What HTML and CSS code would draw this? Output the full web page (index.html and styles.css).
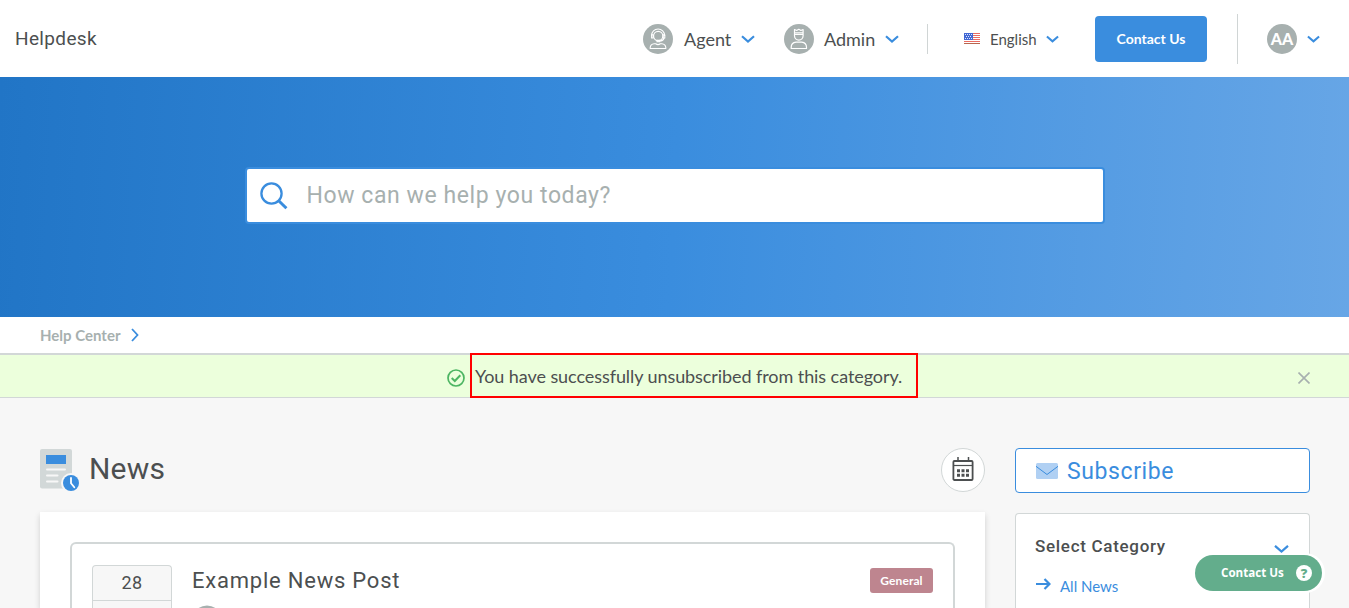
FILE: index.html
```html
<!DOCTYPE html>
<html lang="en">
<head>
<meta charset="utf-8">
<title>Helpdesk</title>
<link rel="stylesheet" href="styles.css">
</head>
<body>
<header class="topbar">
  <div class="brand rubik">Helpdesk</div>
  <nav class="nav">
    <a class="role role-agent">
      <svg class="avatar" viewBox="0 0 30 30"><circle cx="15" cy="15" r="15" fill="#a7b0af"/><g fill="none" stroke="#fff" stroke-width="1.100" stroke-linecap="round" stroke-linejoin="round"><path d="M7.200 24.500v-1q.3-3.300 4-3.700h1.500q2.300 1.700 4.600 0h1.500q3.700.4 4 3.700v1z"/><path d="M8.600 11.500a6.500 6.500 0 0 1 13 0"/><circle cx="15.200" cy="12" r="4.600"/><path d="M8.600 10.700v3.300h1.600v-3.300zM20.200 10.700h1.600V14h-1.600zM21 14.500q-1 2.500-4.500 2.500"/><path d="M14 16.300h2.800v1.400H14z" fill="#fff"/></g></svg>
      <span class="role-name">Agent</span>
      <svg class="chev" viewBox="0 0 14 8"><path d="M1 1.200 7 6.500l6-5.300"/></svg>
    </a>
    <a class="role role-admin">
      <svg class="avatar" viewBox="0 0 30 30"><circle cx="15" cy="15" r="15" fill="#a7b0af"/><g fill="none" stroke="#fff" stroke-width="1.200" stroke-linecap="round" stroke-linejoin="round"><path d="M7.200 24.500v-1.300q0-4.500 4.800-5.100h5.700q4.800.6 4.800 5.100v1.300z"/><path d="M10.500 5.500v6.300a4.300 4.300 0 0 0 8.600 0V5.500l-2.200 1-2.100-1.200-2.100 1.200zM10.500 8.800h8.600M10.500 10.500h8.600"/></g></svg>
      <span class="role-name">Admin</span>
      <svg class="chev" viewBox="0 0 14 8"><path d="M1 1.200 7 6.500l6-5.300"/></svg>
    </a>
    <div class="rule rule-short"></div>
    <a class="lang">
      <svg class="flag" viewBox="0 0 16 11"><path fill="#fff" d="M0 0h16v11H0z"/><path stroke="#e96b62" d="M0 .5h16M0 2.500h16M0 4.500h16M0 6.500h16M0 8.500h16"/><path stroke="#b9664f" d="M0 10.500h16"/><path fill="#4268d3" d="M0 0h9v7H0z"/><path stroke="#dce5ff" stroke-dasharray="1 1" d="M1 1.500h7M2 3.500h6M1 5.500h7"/></svg>
      <span class="lang-name">English</span>
      <svg class="chev chev-sm" viewBox="0 0 14 8"><path d="M1 1.200 7 6.500l6-5.300"/></svg>
    </a>
    <a class="contact">Contact Us</a>
    <div class="rule rule-tall"></div>
    <div class="initials">AA</div>
    <svg class="chev chev-sm" viewBox="0 0 14 8"><path d="M1 1.200 7 6.500l6-5.300"/></svg>
  </nav>
</header>
<section class="hero">
  <div class="search">
    <svg class="lens" viewBox="0 0 28 28"><g fill="none" stroke="#3a8dde" stroke-width="2.300"><circle cx="11.500" cy="11.500" r="10.100"/><path d="m18.700 18.700 7.700 7.600" stroke-width="3"/></g></svg>
    <span class="search-hint rubik">How can we help you today?</span>
  </div>
</section>
<div class="crumbs"><span>Help Center</span><svg class="crumb-arrow" viewBox="0 0 8 14"><path d="m1 1 5.500 6L1 13"/></svg></div>
<div class="notice">
  <svg class="ok" viewBox="0 0 18 18"><g fill="none" stroke="#4cb562" stroke-width="1.700"><circle cx="9" cy="9" r="8"/><path d="m4.700 9 3.100 3 5.500-5.700" stroke-width="2"/></g></svg>
  <div class="notice-box"><span class="notice-text">You have successfully unsubscribed from this category.</span></div>
  <svg class="close" viewBox="0 0 12 12"><path d="m.5.500 11 11M11.500.5l-11 11"/></svg>
</div>
<div class="page">
  <main class="main">
    <div class="heading">
      <svg class="news-icon" viewBox="0 0 40 42"><rect width="32" height="39.500" rx="2" fill="#d2d8d8"/><path fill="#3a8dde" d="M6 6h20v9H6z"/><path d="M7 20.500h18M7 26.500h10.500M7 32.500h10.500" stroke="#f7f7f7" stroke-width="2" stroke-linecap="round"/><circle cx="31" cy="34" r="10" fill="#f7f7f7"/><circle cx="31" cy="34" r="8" fill="#3a8dde"/><path d="M31 29v5.300l3.300 4" fill="none" stroke="#fff" stroke-width="1.800" stroke-linecap="round"/></svg>
      <h1 class="title rubik">News</h1>
      <div class="cal"><svg class="cal-icon" viewBox="0 0 22 24"><g fill="none" stroke="#4c4f50" stroke-width="1.800"><rect x="1.400" y="4" width="19.200" height="19" rx="1"/><path d="M2 8.500h18" stroke-width="1.200"/><path d="M6 0v4M16.500 0v4" stroke-width="1.500"/></g><path d="M5 13.800h12M5 18.300h12" stroke="#4c4f50" stroke-width="3" stroke-dasharray="3 1.500"/></svg></div>
    </div>
    <div class="panel">
      <article class="post">
        <div class="date"><div class="day rubik">28</div></div>
        <div class="post-body">
          <h2 class="post-title rubik">Example News Post</h2>
          <svg class="author" viewBox="0 0 30 6"><circle cx="15" cy="18.500" r="15" fill="#a7b0af"/></svg>
        </div>
        <span class="tag">General</span>
      </article>
    </div>
  </main>
  <aside class="side">
    <a class="subscribe"><svg class="mail" viewBox="0 0 22 16"><rect width="22" height="16" rx="1.500" fill="#b0d0f3"/><path d="m0 3.300 11 8.200 11-8.200" fill="none" stroke="#3a8dde"/></svg><span class="subscribe-text rubik">Subscribe</span></a>
    <div class="cats">
      <div class="cats-head"><span class="cats-title rubik">Select Category</span><svg class="chev cats-chev" viewBox="0 0 14 8"><path d="M.5.800 7 6.500 13.500.800"/></svg></div>
      <div class="cat"><svg class="arrow" viewBox="0 0 15 12"><path d="M0 6h13.500M8.500 1l5 5-5 5" fill="none" stroke="#3a8dde" stroke-width="2.200"/></svg><span>All News</span></div>
    </div>
  </aside>
</div>
<div class="widget"><span class="widget-text">Contact Us</span><span class="help">?</span></div>
</body>
</html>
```
FILE: styles.css
```css
* { box-sizing: border-box; }
html, body { height: 608px; overflow: hidden; }
body { margin: 0; background: #f7f7f7; color: #4c4f50; font-family: Lato, "Liberation Sans", sans-serif; white-space: nowrap; }
svg { display: block; flex: none; }
h1, h2 { margin: 0; font-weight: 400; }
.rubik { font-family: Roboto, "Liberation Sans", sans-serif; }

.topbar { height: 77px; padding: 0 29px 0 15px; background: #fff; display: flex; align-items: center; justify-content: space-between; }
.brand { font-size: 19px; letter-spacing: .35px; }
.nav { display: flex; align-items: center; height: 77px; padding-top: 1px; }
.role { display: flex; align-items: center; }
.role-agent { width: 141px; }
.role-admin { width: 143px; }
.avatar { width: 30px; height: 30px; margin-right: 11px; }
.role-admin .avatar { margin-right: 10px; }
.role-name { font-size: 18px; width: 57px; padding-bottom: 1px; }
.role-admin .role-name { width: 61px; }
.chev { width: 14px; height: 8px; fill: none; stroke: #3a8dde; stroke-width: 2.2; }
.chev-sm { width: 13px; }
.rule { width: 1px; background: #d0d5d5; }
.rule-short { height: 30px; }
.rule-tall { height: 50px; margin: 0 29px 0 30px; }
.lang { display: flex; align-items: center; width: 167px; padding-left: 36px; }
.flag { width: 16px; height: 11px; margin-top: -1px; }
.lang-name { font-size: 15px; width: 56px; margin-left: 10px; padding-bottom: 1px; }
.contact { width: 112px; height: 46px; border-radius: 4px; background: #3a8dde; color: #fff; font-size: 14px; font-weight: 700; line-height: 46px; text-align: center; }
.initials { width: 30px; height: 30px; margin-right: 10px; border-radius: 50%; background: #a7b0af; color: #fff; font-size: 16px; font-weight: 900; line-height: 29px; text-align: center; }

.hero { height: 240px; padding-top: 90px; background: linear-gradient(93deg, #2175c6 0%, #3a8dde 50%, #67a6e6 100%); }
.search { width: 860px; height: 57px; margin: 0 auto; padding: 0 13px; border: 2px solid #3a8dde; border-radius: 4px; background: #fff; display: flex; align-items: center; }
.lens { width: 28px; height: 28px; margin-top: 1px; }
.search-hint { margin-left: 19px; color: #a7b0af; font-size: 23px; letter-spacing: .58px; }

.crumbs { height: 38px; padding: 0 40px; background: #fff; border-bottom: 2px solid #d2d7d7; display: flex; align-items: center; color: #a7b0af; font-size: 15px; font-weight: 700; }
.crumb-arrow { width: 8px; height: 14px; margin-left: 11px; fill: none; stroke: #3a8dde; stroke-width: 1.8; }

.notice { height: 43px; padding: 0 39px 0 447px; background: #ecffdc; border-bottom: 1px solid #d2d7d7; display: flex; align-items: center; }
.ok { width: 18px; height: 18px; margin: 4px 5px 0 0; }
.notice-box { width: 448px; height: 45px; margin: -2px auto -1px 0; flex: none; align-self: flex-start; border: 2px solid #f00; padding-left: 3px; line-height: 42px; font-size: 18px; letter-spacing: -.075px; position: relative; }
.close { width: 12px; height: 12px; margin-top: 4px; fill: none; stroke: #a7b0af; stroke-width: 1.6; }

.page { display: flex; justify-content: space-between; height: 210px; padding: 50px 39px 0 40px; }
.main { width: 945px; }
.heading { display: flex; align-items: center; height: 44px; margin-bottom: 20px; }
.news-icon { width: 40px; height: 42px; }
.title { margin-left: 9px; font-size: 30px; line-height: 34px; padding-bottom: 2px; letter-spacing: .2px; }
.cal { width: 44px; height: 44px; margin-left: auto; border: 1px solid #d2d7d7; border-radius: 50%; background: #fff; display: flex; align-items: center; justify-content: center; }
.cal-icon { width: 22px; height: 24px; margin-top: -2px; }
.panel { height: 96px; padding: 30px 30px 0; background: #fff; box-shadow: 0 3px 6px rgba(0, 0, 0, .16); }
.post { height: 66px; padding: 21px 20px 0; border: 2px solid #d2d7d7; border-bottom: 0; border-radius: 6px 6px 0 0; display: flex; align-items: flex-start; }
.date { width: 80px; height: 43px; border: 1px solid #d2d7d7; border-bottom: 0; border-radius: 4px 4px 0 0; background: #f7f7f7; }
.day { height: 35px; border-bottom: 1px solid #d2d7d7; font-size: 18px; line-height: 34px; text-align: center; letter-spacing: .5px; }
.post-body { margin-left: 20px; }
.post-title { font-size: 22px; line-height: 30px; padding-top: 1px; letter-spacing: .78px; }
.author { width: 30px; height: 6px; margin-top: 6px; }
.tag { width: 63px; height: 25px; margin: 3px 0 0 auto; border-radius: 3px; background: #be858f; color: #fff; font-size: 12px; font-weight: 700; line-height: 25px; text-align: center; letter-spacing: .1px; }

.side { width: 295px; }
.subscribe { height: 45px; padding-left: 20px; border: 1px solid #3a8dde; border-radius: 4px; background: #fff; color: #3a8dde; display: flex; align-items: center; }
.mail { width: 22px; height: 16px; }
.subscribe-text { margin-left: 9px; padding-top: 1px; font-size: 23px; letter-spacing: .6px; }
.cats { height: 95px; margin-top: 20px; padding: 20px 20px 0; border: 1px solid #d2d7d7; border-bottom: 0; border-radius: 4px 4px 0 0; background: #fff; }
.cats-head { display: flex; align-items: center; justify-content: space-between; height: 25px; }
.cats-title { margin-left: -1px; padding-bottom: 2px; font-size: 17px; font-weight: 500; letter-spacing: .7px; }
.cats-chev { width: 15px; margin-top: 5px; }
.cat { display: flex; align-items: center; margin-top: 18px; color: #3a8dde; font-size: 15px; }
.arrow { width: 15px; height: 12px; margin: -4px 9px 0 0; }

.widget { position: absolute; left: 1195px; top: 555px; width: 127px; height: 36px; padding: 0 10px 0 26px; border-radius: 18px; background: #63ad8c; box-shadow: 1px 0 0 2px #fff; color: #fff; display: flex; align-items: center; justify-content: space-between; font-family: "Open Sans", sans-serif; font-weight: 700; font-size: 11.600px; }
.widget-text { padding-bottom: 1px; }
.help { width: 16px; height: 16px; border-radius: 50%; background: #fff; color: #63ad8c; font-size: 13px; font-weight: 800; line-height: 16px; text-align: center; }
```
